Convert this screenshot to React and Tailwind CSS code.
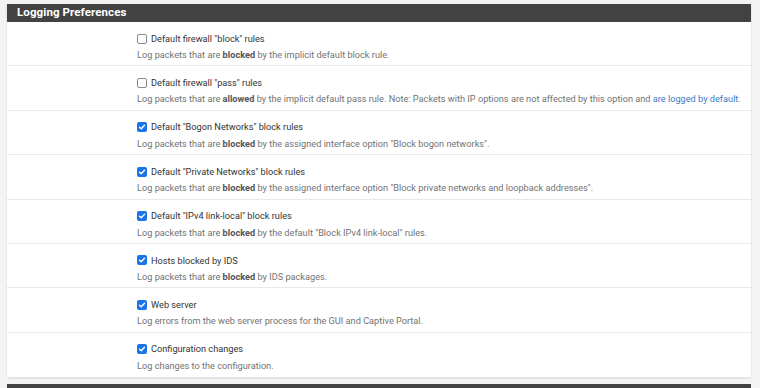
import React from "react";

const rows = [
  {
    checked: false,
    label: 'Default firewall "block" rules',
    desc: (
      <>
        Log packets that are <b className="font-bold text-[#555]">blocked</b> by the implicit default block rule.
      </>
    ),
  },
  {
    checked: false,
    label: 'Default firewall "pass" rules',
    desc: (
      <>
        Log packets that are <b className="font-bold text-[#555]">allowed</b> by the implicit default pass rule. Note: Packets with IP options are not affected by this option and{" "}
        <span className="text-[#3a7bc8]">are logged by default</span>.
      </>
    ),
  },
  {
    checked: true,
    label: 'Default "Bogon Networks" block rules',
    desc: (
      <>
        Log packets that are <b className="font-bold text-[#555]">blocked</b> by the assigned interface option "Block bogon networks".
      </>
    ),
  },
  {
    checked: true,
    label: 'Default "Private Networks" block rules',
    desc: (
      <>
        Log packets that are <b className="font-bold text-[#555]">blocked</b> by the assigned interface option "Block private networks and loopback addresses".
      </>
    ),
  },
  {
    checked: true,
    label: 'Default "IPv4 link-local" block rules',
    desc: (
      <>
        Log packets that are <b className="font-bold text-[#555]">blocked</b> by the default "Block IPv4 link-local" rules.
      </>
    ),
  },
  {
    checked: true,
    label: "Hosts blocked by IDS",
    desc: (
      <>
        Log packets that are <b className="font-bold text-[#555]">blocked</b> by IDS packages.
      </>
    ),
  },
  {
    checked: true,
    label: "Web server",
    desc: <>Log errors from the web server process for the GUI and Captive Portal.</>,
  },
  {
    checked: true,
    label: "Configuration changes",
    desc: <>Log changes to the configuration.</>,
  },
];

function Box({ checked }) {
  if (checked) {
    return (
      <span className="flex h-[10px] w-[10px] shrink-0 items-center justify-center rounded-[2px] bg-[#1a73e8]">
        <svg width="8" height="8" viewBox="0 0 8 8">
          <path d="M1.5 4.2 L3.2 5.8 L6.5 2.2" fill="none" stroke="white" strokeWidth="1.4" strokeLinecap="round" strokeLinejoin="round" />
        </svg>
      </span>
    );
  }
  return <span className="h-[10px] w-[10px] shrink-0 rounded-[2px] border border-[#8a8a8a] bg-white" />;
}

export default function App() {
  return (
    <div
      className="h-[388px] w-[760px] overflow-hidden bg-[#f3f3f3] pl-[7px] pr-[9px] pt-[4px]"
      style={{ fontFamily: "Roboto, 'Liberation Sans', sans-serif" }}
    >
      <div className="bg-white shadow-[0_1px_2px_rgba(0,0,0,0.12)]">
        <div className="flex h-[18px] items-center bg-[#424242] pl-[10px] text-[11.5px] font-bold tracking-[0.1px] text-white">
          Logging Preferences
        </div>
        {rows.map((r, i) => (
          <div
            key={i}
            className={`h-[44.4px] pl-[130px] pt-[10px] ${i < rows.length - 1 ? "border-b border-[#e8e8e8]" : ""}`}
          >
            <div className="flex h-[13px] items-center gap-[4px] whitespace-nowrap text-[9.2px] text-[#333]">
              <Box checked={r.checked} />
              <span>{r.label}</span>
            </div>
            <div className="mt-[3px] h-[13px] whitespace-nowrap text-[9.2px] leading-[13px] text-[#737373]">{r.desc}</div>
          </div>
        ))}
      </div>
      <div className="mt-[7px] h-[10px] bg-[#424242]" />
    </div>
  );
}
